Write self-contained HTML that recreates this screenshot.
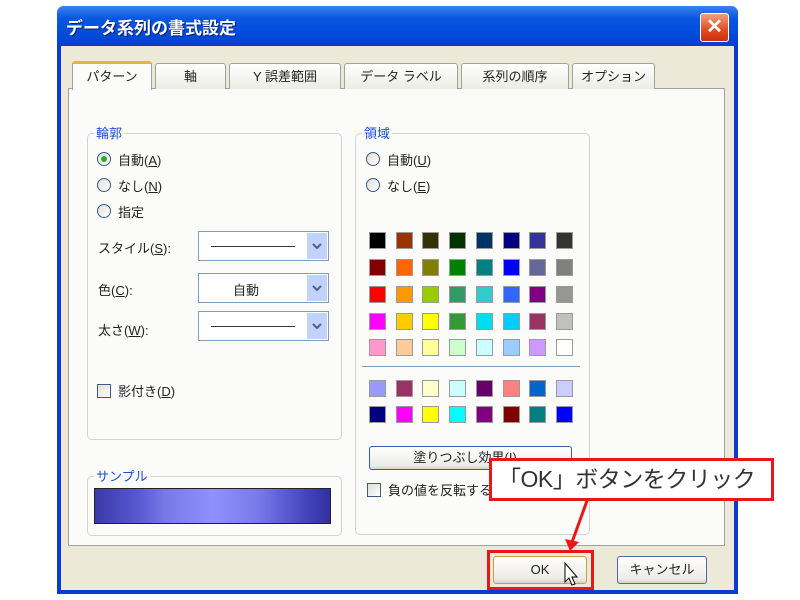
<!DOCTYPE html>
<html><head><meta charset="utf-8"><style>
*{margin:0;padding:0;box-sizing:border-box}
body{width:800px;height:600px;background:#fff;position:relative;overflow:hidden;font-family:"Liberation Sans","Noto Sans CJK JP",sans-serif;font-size:13px;color:#222}
.a{position:absolute}
.win{left:57px;top:6px;width:681px;height:588px;background:#0a3ad0;border-radius:7px 7px 0 0}
.title{left:57px;top:6px;width:681px;height:40px;border-radius:7px 7px 0 0;background:linear-gradient(#3b82f0,#0a58e0 30%,#0048d8 80%,#0a3ec8)}
.body{left:61px;top:46px;width:673px;height:544px;background:#ece9d8}
.tab{top:63px;height:26px;background:linear-gradient(#fff,#ecebe4);border:1px solid #9ca59c;border-bottom:none;border-radius:3px 3px 0 0;text-align:center;line-height:25px;font-size:13px}
.panel{left:68px;top:88px;width:657px;height:458px;background:#fbfbf9;border:1px solid #9ca59c}
.grp{border:1px solid #d5d2c6;border-radius:5px}
.lg{color:#1a4fe0;background:#fbfbf9;padding:0 2px;font-size:13px}
.rad{width:14px;height:14px;border:1px solid #3a5a88;border-radius:50%;background:linear-gradient(135deg,#e0ddd4,#fff)}
.chk{width:14px;height:14px;border:1px solid #3a5a88;background:linear-gradient(135deg,#e0ddd4,#fff)}
.sel{width:131px;height:30px;border:1px solid #7f9db9;background:#fff}
.sel .dd{position:absolute;right:1px;top:1px;width:20px;height:26px;background:#c1d3fb}
.sel .ln{position:absolute;left:12px;top:14px;width:84px;height:1px;background:#333}
.sw{width:17px;height:17px;border:1px solid #9a9a9a}
.btn{border:1px solid #003c74;border-radius:3px;background:linear-gradient(#fff,#ecebe6 85%,#d6d0c5);text-align:center;font-size:13px}
</style></head><body>
<div class="a win"></div>
<div class="a title"></div>
<div class="a" style="left:66px;top:14px;color:#fff;font-size:17px;font-weight:bold;text-shadow:1px 1px #0a2070">データ系列の書式設定</div>
<div class="a" style="left:700px;top:13px;width:29px;height:29px;border:1px solid #fff;border-radius:3px;background:linear-gradient(#f0a080,#e04a20 60%,#c83010);color:#fff;font-size:20px;font-weight:bold;text-align:center;line-height:27px">✕</div>
<div class="a body"></div>
<div class="a panel"></div>
<div class="a tab" style="left:72px;top:61px;width:80px;height:29px;background:#fbfbf9;border-top:3px solid #f0b040">パターン</div>
<div class="a tab" style="left:155px;width:71px">軸</div>
<div class="a tab" style="left:229px;width:112px">Y 誤差範囲</div>
<div class="a tab" style="left:344px;width:114px">データ ラベル</div>
<div class="a tab" style="left:461px;width:108px">系列の順序</div>
<div class="a tab" style="left:572px;width:83px">オプション</div>

<div class="a grp" style="left:87px;top:133px;width:255px;height:307px"></div>
<div class="a lg" style="left:94px;top:123px">輪郭</div>
<div class="a rad" style="left:97px;top:152px"><div class="a" style="left:3px;top:3px;width:6px;height:6px;border-radius:50%;background:#2fa82f"></div></div>
<div class="a" style="left:118px;top:150px">自動(<u>A</u>)</div>
<div class="a rad" style="left:97px;top:178px"></div>
<div class="a" style="left:118px;top:176px">なし(<u>N</u>)</div>
<div class="a rad" style="left:97px;top:204px"></div>
<div class="a" style="left:118px;top:202px">指定</div>
<div class="a" style="left:98px;top:238px">スタイル(<u>S</u>):</div>
<div class="a sel" style="left:198px;top:231px"><div class="ln"></div><div class="dd"><svg width="20" height="26"><path d="M6 11 L10 15 L14 11" stroke="#4d6185" stroke-width="2" fill="none"/></svg></div></div>
<div class="a" style="left:98px;top:280px">色(<u>C</u>):</div>
<div class="a sel" style="left:198px;top:273px"><div class="a" style="left:34px;top:6px">自動</div><div class="dd"><svg width="20" height="26"><path d="M6 11 L10 15 L14 11" stroke="#4d6185" stroke-width="2" fill="none"/></svg></div></div>
<div class="a" style="left:98px;top:320px">太さ(<u>W</u>):</div>
<div class="a sel" style="left:198px;top:311px"><div class="ln"></div><div class="dd"><svg width="20" height="26"><path d="M6 11 L10 15 L14 11" stroke="#4d6185" stroke-width="2" fill="none"/></svg></div></div>
<div class="a chk" style="left:97px;top:384px"></div>
<div class="a" style="left:118px;top:381px">影付き(<u>D</u>)</div>

<div class="a grp" style="left:87px;top:476px;width:255px;height:60px"></div>
<div class="a lg" style="left:94px;top:466px">サンプル</div>
<div class="a" style="left:94px;top:488px;width:237px;height:36px;border:1px solid #222;background:linear-gradient(90deg,#3a3aa8,#5858d0 18%,#7878e8 30%,#9090ff 50%,#7878e8 70%,#5050c8 85%,#3030a0)"></div>

<div class="a grp" style="left:355px;top:133px;width:235px;height:402px"></div>
<div class="a lg" style="left:362px;top:123px">領域</div>
<div class="a rad" style="left:366px;top:152px"></div>
<div class="a" style="left:387px;top:150px">自動(<u>U</u>)</div>
<div class="a rad" style="left:366px;top:178px"></div>
<div class="a" style="left:387px;top:176px">なし(<u>E</u>)</div>
<div class="a" style="left:362px;top:366px;width:218px;height:1px;background:#7f9db9"></div>
<div id="g"></div>
<div class="a btn" style="left:369px;top:446px;width:203px;height:24px;border-color:#3a5ab0;line-height:22px">塗りつぶし効果(<u>I</u>)...</div>
<div class="a chk" style="left:367px;top:483px"></div>
<div class="a" style="left:388px;top:480px">負の値を反転する(<u>V</u>)</div>

<div class="a btn" style="left:493px;top:556px;width:94px;height:28px;line-height:26px;border-color:#c8a040">OK</div>
<div class="a btn" style="left:617px;top:556px;width:90px;height:28px;line-height:26px;border-color:#4a6aa8">キャンセル</div>
<div class="a" style="left:487px;top:550px;width:107px;height:40px;border:3px solid #e81818"></div>
<svg class="a" style="left:560px;top:560px" width="22" height="30"><path d="M5 3 L5 22 L9 18 L12 25 L15 24 L12 17 L17 17 Z" fill="#fff" stroke="#000"/></svg>

<svg class="a" style="left:555px;top:495px" width="50" height="60"><path d="M33 3 L16 50" stroke="#e81818" stroke-width="3"/><path d="M10 44 L15 56 L24 47 Z" fill="#e81818"/></svg>
<div class="a" style="left:489px;top:458px;width:285px;height:43px;border:3px solid #e81818;background:#fff;font-size:23px;line-height:36px;padding-left:6px;color:#333;white-space:nowrap;letter-spacing:-0.5px">「OK」ボタンをクリック</div>
<script>
var r=[["#000","#993300","#333300","#003300","#003366","#000080","#333399","#333"],["#800000","#FF6600","#808000","#008000","#008080","#0000FF","#666699","#808080"],["#FF0000","#FF9900","#99CC00","#339966","#33CCCC","#3366FF","#800080","#969696"],["#FF00FF","#FFCC00","#FFFF00","#339933","#00DDEE","#00CCFF","#993366","#C0C0C0"],["#FF99CC","#FFCC99","#FFFF99","#CCFFCC","#CCFFFF","#99CCFF","#CC99FF","#FFFFFF"],["#9999FF","#993366","#FFFFCC","#CCFFFF","#660066","#FF8080","#0066CC","#CCCCFF"],["#000080","#FF00FF","#FFFF00","#00FFFF","#800080","#800000","#008080","#0000FF"]];
var ys=[232,259,286,313,339,380,406],h="";
for(var i=0;i<7;i++)for(var j=0;j<8;j++)h+='<div class="a sw" style="left:'+(369+j*26.7)+'px;top:'+ys[i]+'px;background:'+r[i][j]+'"></div>';
document.getElementById("g").innerHTML=h;
</script>
</body></html>
